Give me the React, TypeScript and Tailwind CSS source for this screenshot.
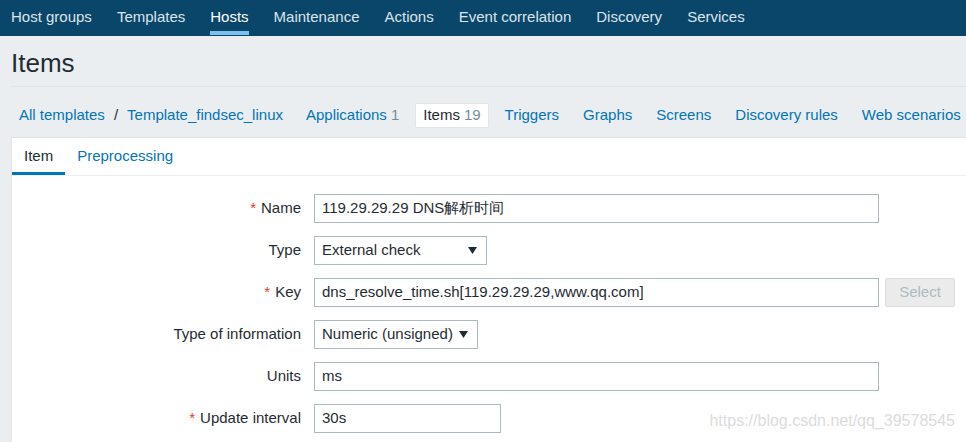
import React from 'react'

const navItems = ['Host groups', 'Templates', 'Hosts', 'Maintenance', 'Actions', 'Event correlation', 'Discovery', 'Services']

const Caret = () => (
  <svg width="9" height="7" viewBox="0 0 9 7" className="shrink-0">
    <path d="M0 0 L9 0 L4.5 7 Z" fill="#1f2c33" />
  </svg>
)

interface RowProps {
  label: string
  required?: boolean
  children: React.ReactNode
}

const Row: React.FC<RowProps> = ({ label, required, children }) => (
  <div className="flex items-center gap-[13px] h-[29px]">
    <div className="w-[289px] shrink-0 text-right text-[#1f2c33]">
      {required && <span className="text-[#e33734] mr-[5px]">*</span>}
      {label}
    </div>
    {children}
  </div>
)

const inputCls = 'h-[29px] border border-[#acbbc2] bg-white px-[7px] flex items-center text-[#1f2c33] shrink-0'

export default function App() {
  return (
    <div className="relative w-[966px] h-[442px] overflow-hidden bg-[#ebeef0] font-['Liberation_Sans',Arial,sans-serif] text-[15px]">
      {/* top nav */}
      <div className="h-[36px] bg-[#0a466a] flex items-stretch gap-[25px] pl-[11px]">
        {navItems.map((n) => (
          <div key={n} className="relative flex items-center pb-[1px] whitespace-nowrap">
            <span className={n === 'Hosts' ? 'text-white' : 'text-[#dbe4ea]'}>{n}</span>
            {n === 'Hosts' && <div className="absolute left-0 right-0 bottom-[1px] h-[4px] bg-[#7cc0f0]" />}
          </div>
        ))}
      </div>

      <div className="pl-[11px]">
        {/* title */}
        <div className="pt-[11px] pb-[7px] border-b border-[#dfe4e7]">
          <h1 className="text-[26px] leading-[32px] text-[#1f2c33] font-normal">Items</h1>
        </div>

        {/* breadcrumb / sub tabs */}
        <div className="flex items-center pt-[16px] pb-[9px] text-[#0275b8] whitespace-nowrap">
          <div className="h-[25px] flex items-center px-[8px]">All templates</div>
          <span className="mx-[1px] text-[#1f2c33]">/</span>
          <div className="h-[25px] flex items-center px-[8px]">Template_findsec_linux</div>
          <div className="flex items-center gap-[8px] ml-[7px]">
            <div className="h-[25px] flex items-center px-[8px]">
              Applications<span className="text-[#768d99] ml-[4px]">1</span>
            </div>
            <div className="h-[25px] flex items-center px-[7px] bg-white border border-[#dfe4e7] rounded-[2px] text-[#1f2c33]">
              Items<span className="text-[#768d99] ml-[4px]">19</span>
            </div>
            <div className="h-[25px] flex items-center px-[8px]">Triggers</div>
            <div className="h-[25px] flex items-center px-[8px]">Graphs</div>
            <div className="h-[25px] flex items-center px-[8px]">Screens</div>
            <div className="h-[25px] flex items-center px-[8px]">Discovery rules</div>
            <div className="h-[25px] flex items-center px-[8px]">Web scenarios</div>
          </div>
        </div>

        {/* panel */}
        <div className="bg-white border-l border-t border-[#dfe4e7] h-[400px]">
          <div className="flex border-b border-[#ebeef0]">
            <div className="h-[37px] pt-[2px] px-[12px] flex items-center border-b-[3px] border-[#0275b8] text-[#1f2c33]">Item</div>
            <div className="h-[37px] pt-[2px] px-[12px] flex items-center text-[#0275b8] border-b-[3px] border-transparent">Preprocessing</div>
          </div>

          <div className="pt-[18px] flex flex-col gap-[13px]">
            <Row label="Name" required>
              <div className={`${inputCls} w-[565px]`}>119.29.29.29 DNS解析时间</div>
            </Row>
            <Row label="Type">
              <div className={`${inputCls} w-[173px] justify-between pr-[9px]`}>
                <span>External check</span>
                <Caret />
              </div>
            </Row>
            <Row label="Key" required>
              <div className={`${inputCls} w-[565px]`}>dns_resolve_time.sh[119.29.29.29,www.qq.com]</div>
              <div className="-ml-[7px] h-[29px] w-[70px] flex items-center justify-center bg-[#ebebeb] border border-[#dcdcdc] rounded-[2px] text-[#acbbc2]">
                Select
              </div>
            </Row>
            <Row label="Type of information">
              <div className={`${inputCls} w-[164px] justify-between pr-[9px]`}>
                <span>Numeric (unsigned)</span>
                <Caret />
              </div>
            </Row>
            <Row label="Units">
              <div className={`${inputCls} w-[565px]`}>ms</div>
            </Row>
            <Row label="Update interval" required>
              <div className={`${inputCls} w-[187px]`}>30s</div>
            </Row>
          </div>
        </div>
      </div>

      <div className="absolute right-[11px] bottom-[9px] text-[16px] text-[#dcdcdc]">https://blog.csdn.net/qq_39578545</div>
    </div>
  )
}
